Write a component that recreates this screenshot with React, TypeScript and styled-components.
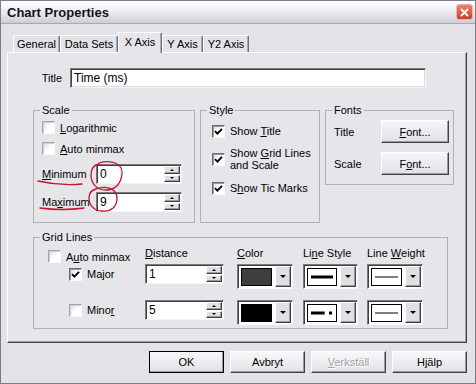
import React from 'react'
import styled, { createGlobalStyle } from 'styled-components'

const GlobalStyle = createGlobalStyle`
  body {
    margin: 0;
    font-family: "Liberation Sans", Arial, sans-serif;
    font-size: 11px;
    color: #000;
  }
`

const Window = styled.div`
  position: relative;
  width: 476px;
  height: 384px;
  box-sizing: border-box;
  background: #e3e3e7;
  border: 1px solid #7c7c8a;
  display: flex;
  flex-direction: column;
  overflow: hidden;
`

const TitleBar = styled.div`
  height: 22px;
  display: flex;
  align-items: center;
  justify-content: space-between;
  padding: 0 2px 0 6px;
  background: linear-gradient(#ffffff, #efeff3 45%, #cdcdd6);
  border-bottom: 1px solid #a9a9b6;
  font-size: 13px;
  font-weight: bold;
  color: #151515;
`

const CloseButton = styled.div`
  width: 17px;
  height: 16px;
  box-sizing: border-box;
  border-radius: 3px;
  border: 1px solid #f3b0a6;
  background: linear-gradient(#e8826f, #c8412c);
  display: flex;
  align-items: center;
  justify-content: center;
`

const Body = styled.div`
  flex: 1;
  display: flex;
  flex-direction: column;
  padding: 8px 8px 0 6px;
`

const TabStrip = styled.div`
  height: 20px;
  display: flex;
  align-items: flex-end;
  padding-left: 6px;
`

const Tab = styled.div<{ $w: number; $active?: boolean }>`
  position: relative;
  z-index: ${p => (p.$active ? 2 : 0)};
  width: ${p => p.$w}px;
  height: ${p => (p.$active ? 21 : 17)}px;
  margin-bottom: ${p => (p.$active ? -1 : 0)}px;
  box-sizing: border-box;
  background: ${p => (p.$active ? '#e6e6ea' : '#e3e3e7')};
  border-top: 1px solid #ffffff;
  border-left: 1px solid #ffffff;
  border-right: 1px solid #6f6f6f;
  border-radius: 2px 2px 0 0;
  box-shadow: inset -1px 0 0 #a8a8ae;
  display: flex;
  align-items: center;
  justify-content: center;
  padding-bottom: ${p => (p.$active ? 3 : 0)}px;
`

const Panel = styled.div`
  height: 291px;
  box-sizing: border-box;
  background: #e6e6ea;
  border: 1px solid;
  border-color: #ffffff #404040 #404040 #ffffff;
  box-shadow: inset -1px -1px 0 #a0a0a6;
  padding: 15px 0 0 25px;
  display: flex;
  flex-direction: column;
`

const TitleRow = styled.div`
  height: 20px;
  display: flex;
  align-items: center;
`

const RightLabel = styled.span<{ $w: number }>`
  width: ${p => p.$w}px;
  margin-right: 8px;
  text-align: right;
`

const TextInput = styled.div<{ $w: number }>`
  width: ${p => p.$w}px;
  height: 20px;
  box-sizing: border-box;
  background: #fff;
  border: 1px solid;
  border-color: #7a7a7a #f4f4f4 #f4f4f4 #7a7a7a;
  box-shadow: inset 1px 1px 0 #404040, inset -1px -1px 0 #dcdce0;
  padding-left: 3px;
  display: flex;
  align-items: center;
  font-size: 12px;
`

const GroupsRow = styled.div`
  margin-top: 16px;
  display: flex;
  align-items: flex-start;
  gap: 5px;
`

const Group = styled.fieldset<{ $w: number; $h: number }>`
  box-sizing: border-box;
  width: ${p => p.$w}px;
  height: ${p => p.$h}px;
  margin: 0;
  padding: 0;
  min-width: 0;
  border: 1px solid #b0b0b8;
`

const Legend = styled.legend`
  margin-left: 6px;
  padding: 0 2px;
  line-height: 13px;
`

const GroupBody = styled.div<{ $pt: number; $pl: number }>`
  display: flex;
  flex-direction: column;
  padding: ${p => p.$pt}px 0 0 ${p => p.$pl}px;
`

const CheckRow = styled.label<{ $h: number; $mt?: number; $indent?: number }>`
  height: ${p => p.$h}px;
  margin-top: ${p => p.$mt ?? 0}px;
  margin-left: ${p => p.$indent ?? 0}px;
  display: flex;
  align-items: center;
  gap: 5px;
  line-height: 12px;
  white-space: nowrap;
`

const Box = styled.span<{ $checked?: boolean }>`
  flex: none;
  width: 13px;
  height: 13px;
  box-sizing: border-box;
  background: linear-gradient(135deg, #dcdce0, #ffffff 55%);
  border: 1px solid;
  border-color: ${p => (p.$checked ? '#6a6a6a' : '#a4a4aa')} #f8f8f8 #f8f8f8
    ${p => (p.$checked ? '#6a6a6a' : '#a4a4aa')};
  box-shadow: inset 1px 1px 0 ${p => (p.$checked ? '#9a9a9a' : '#cfcfd4')};
  display: flex;
  align-items: center;
  justify-content: center;
`

const FieldRow = styled.div<{ $mt: number }>`
  margin-top: ${p => p.$mt}px;
  height: 20px;
  display: flex;
  align-items: center;
`

const FieldLabel = styled.span<{ $w: number }>`
  width: ${p => p.$w}px;
  flex: none;
`

const Spin = styled.div<{ $w: number; $mt?: number }>`
  width: ${p => p.$w}px;
  height: 20px;
  margin-top: ${p => p.$mt ?? 0}px;
  box-sizing: border-box;
  background: #fff;
  border: 1px solid;
  border-color: #7a7a7a #f4f4f4 #f4f4f4 #7a7a7a;
  box-shadow: inset 1px 1px 0 #404040;
  display: flex;
  align-items: stretch;
`

const SpinValue = styled.span`
  flex: 1;
  padding-left: 3px;
  display: flex;
  align-items: center;
  font-size: 12px;
`

const SpinButtons = styled.div`
  width: 16px;
  display: flex;
  flex-direction: column;
  gap: 1px;
  padding: 1px 1px 1px 0;
`

const Raised = styled.div`
  box-sizing: border-box;
  background: #e0e0e4;
  border: 1px solid;
  border-color: #ffffff #404040 #404040 #ffffff;
  box-shadow: inset -1px -1px 0 #9a9aa0;
  display: flex;
  align-items: center;
  justify-content: center;
`

const SpinButton = styled(Raised)`
  flex: 1;
`

const Arrow = styled.span<{ $up?: boolean; $size?: number }>`
  width: 0;
  height: 0;
  border-left: ${p => p.$size ?? 2}px solid transparent;
  border-right: ${p => p.$size ?? 2}px solid transparent;
  ${p => (p.$up ? 'border-bottom' : 'border-top')}: ${p => p.$size ?? 2}px solid #000;
`

const FontRow = styled.div<{ $mt?: number }>`
  margin-top: ${p => p.$mt ?? 0}px;
  height: 23px;
  display: flex;
  align-items: center;
`

const SmallButton = styled(Raised)<{ $w: number; $h: number }>`
  width: ${p => p.$w}px;
  height: ${p => p.$h}px;
  background: linear-gradient(#f6f6f8, #e2e2e6);
`

const GridGroup = styled(Group)`
  margin-top: 8px;
`

const GridBody = styled.div`
  display: grid;
  grid-template-columns: 97px 92px 66px 64px 56px;
  grid-template-rows: 19px 36px 27px;
  padding-left: 14px;
  align-items: start;
`

const ColLabel = styled.span`
  align-self: center;
  margin-top: -1px;
  white-space: nowrap;
`

const Combo = styled.div<{ $w: number }>`
  width: ${p => p.$w}px;
  height: 25px;
  margin-top: 1px;
  box-sizing: border-box;
  background: #fff;
  border: 1px solid;
  border-color: #7a7a7a #f8f8f8 #f8f8f8 #7a7a7a;
  box-shadow: inset 1px 1px 0 #404040;
  padding: 3px 1px 2px 3px;
  display: flex;
  gap: 3px;
`

const Swatch = styled.div<{ $fill?: string }>`
  flex: 1;
  box-sizing: border-box;
  border: 1px solid #000;
  background: ${p => p.$fill ?? '#fff'};
  display: flex;
  align-items: center;
  padding: 0 3px;
`

const DropButton = styled(Raised)`
  width: 16px;
  margin: -2px 0 -1px;
`

const ButtonRow = styled.div`
  margin-top: 8px;
  display: flex;
  justify-content: flex-end;
  gap: 6px;
`

const DialogButton = styled(Raised)<{ $default?: boolean; $disabled?: boolean }>`
  width: 75px;
  height: 22px;
  background: linear-gradient(#f8f8fa, #e2e2e6);
  ${p => (p.$default ? 'outline: 1px solid #000; outline-offset: -1px;' : '')}
  color: ${p => (p.$disabled ? '#a2a2a8' : '#000')};
  text-shadow: ${p => (p.$disabled ? '1px 1px 0 #fff' : 'none')};
`

const U = styled.span`
  text-decoration: underline;
`

const Marks = styled.svg`
  position: absolute;
  left: -1px;
  top: -1px;
  pointer-events: none;
`

const Check = () => (
  <svg width="9" height="9" viewBox="0 0 9 9">
    <path d="M1 4.2 L3.4 6.6 L8 1.8" fill="none" stroke="#000" strokeWidth="1.9" />
  </svg>
)

const CheckBox = ({ checked }: { checked?: boolean }) => (
  <Box $checked={checked}>{checked ? <Check /> : null}</Box>
)

const SpinBox = ({ value, w, mt }: { value: string; w: number; mt?: number }) => (
  <Spin $w={w} $mt={mt}>
    <SpinValue>{value}</SpinValue>
    <SpinButtons>
      <SpinButton><Arrow $up /></SpinButton>
      <SpinButton><Arrow /></SpinButton>
    </SpinButtons>
  </Spin>
)

const LineSample = ({ weight, dashed }: { weight: number; dashed?: boolean }) => (
  <svg width="100%" height="8">
    {dashed ? (
      <>
        <line x1="0" y1="4" x2="62%" y2="4" stroke="#000" strokeWidth={weight} />
        <rect x="82%" y="2.5" width="3" height="3" fill="#000" />
      </>
    ) : (
      <line x1="0" y1="4" x2="100%" y2="4" stroke="#000" strokeWidth={weight} />
    )}
  </svg>
)

const ComboBox = ({ w, children, fill }: { w: number; children?: React.ReactNode; fill?: string }) => (
  <Combo $w={w}>
    <Swatch $fill={fill}>{children}</Swatch>
    <DropButton><Arrow $size={3} /></DropButton>
  </Combo>
)

const tabs = [
  { label: 'General', w: 47 },
  { label: 'Data Sets', w: 58 },
  { label: 'X Axis', w: 44, active: true },
  { label: 'Y Axis', w: 41 },
  { label: 'Y2 Axis', w: 46 },
]

export default function App() {
  return (
    <>
      <GlobalStyle />
      <Window>
        <TitleBar>
          <span>Chart Properties</span>
          <CloseButton>
            <svg width="9" height="9" viewBox="0 0 9 9">
              <path d="M1 1 L8 8 M8 1 L1 8" stroke="#fff" strokeWidth="1.8" />
            </svg>
          </CloseButton>
        </TitleBar>
        <Body>
          <TabStrip>
            {tabs.map(t => (
              <Tab key={t.label} $w={t.w} $active={t.active}>{t.label}</Tab>
            ))}
          </TabStrip>
          <Panel>
            <TitleRow>
              <RightLabel $w={29}>Title</RightLabel>
              <TextInput $w={356}>Time (ms)</TextInput>
            </TitleRow>

            <GroupsRow>
              <Group $w={162} $h={119}>
                <Legend>Scale</Legend>
                <GroupBody $pt={0} $pl={8}>
                  <CheckRow $h={21}><CheckBox /><span><U>L</U>ogarithmic</span></CheckRow>
                  <CheckRow $h={21}><CheckBox /><span><U>A</U>uto minmax</span></CheckRow>
                  <FieldRow $mt={5}>
                    <FieldLabel $w={54}><U>M</U>inimum</FieldLabel>
                    <SpinBox value="0" w={86} />
                  </FieldRow>
                  <FieldRow $mt={8}>
                    <FieldLabel $w={54}>Ma<U>x</U>imum</FieldLabel>
                    <SpinBox value="9" w={86} />
                  </FieldRow>
                </GroupBody>
              </Group>

              <Group $w={120} $h={119}>
                <Legend>Style</Legend>
                <GroupBody $pt={4} $pl={11}>
                  <CheckRow $h={20}><CheckBox checked /><span>Show <U>T</U>itle</span></CheckRow>
                  <CheckRow $h={26} $mt={5}>
                    <CheckBox checked />
                    <span>Show <U>G</U>rid Lines<br />and Scale</span>
                  </CheckRow>
                  <CheckRow $h={20} $mt={6}><CheckBox checked /><span>S<U>h</U>ow Tic Marks</span></CheckRow>
                </GroupBody>
              </Group>

              <Group $w={129} $h={81}>
                <Legend>Fonts</Legend>
                <GroupBody $pt={3} $pl={8}>
                  <FontRow>
                    <FieldLabel $w={47}>Title</FieldLabel>
                    <SmallButton $w={68} $h={23}><span><U>F</U>ont...</span></SmallButton>
                  </FontRow>
                  <FontRow $mt={9}>
                    <FieldLabel $w={47}>Scale</FieldLabel>
                    <SmallButton $w={68} $h={23}><span>F<U>o</U>nt...</span></SmallButton>
                  </FontRow>
                </GroupBody>
              </Group>
            </GroupsRow>

            <GridGroup $w={415} $h={98}>
              <Legend>Grid Lines</Legend>
              <GridBody>
                <CheckRow $h={19} $mt={3}><CheckBox /><span>A<U>u</U>to minmax</span></CheckRow>
                <ColLabel><U>D</U>istance</ColLabel>
                <ColLabel><U>C</U>olor</ColLabel>
                <ColLabel>Li<U>n</U>e Style</ColLabel>
                <ColLabel>Line <U>W</U>eight</ColLabel>

                <CheckRow $h={20} $mt={1} $indent={21}><CheckBox checked /><span>Major</span></CheckRow>
                <SpinBox value="1" w={79} mt={1} />
                <ComboBox w={56} fill="#3e3e3e" />
                <ComboBox w={55}><LineSample weight={3} /></ComboBox>
                <ComboBox w={56}><LineSample weight={1} /></ComboBox>

                <CheckRow $h={20} $mt={1} $indent={21}><CheckBox /><span>Mino<U>r</U></span></CheckRow>
                <SpinBox value="5" w={79} mt={1} />
                <ComboBox w={56} fill="#000" />
                <ComboBox w={55}><LineSample weight={3} dashed /></ComboBox>
                <ComboBox w={56}><LineSample weight={1} /></ComboBox>
              </GridBody>
            </GridGroup>
          </Panel>

          <ButtonRow>
            <DialogButton $default>OK</DialogButton>
            <DialogButton>Avbryt</DialogButton>
            <DialogButton $disabled><span><U>V</U>erkställ</span></DialogButton>
            <DialogButton>Hjälp</DialogButton>
          </ButtonRow>
        </Body>

        <Marks width="476" height="384" viewBox="0 0 476 384">
          <g fill="none" stroke="#c8102e" strokeWidth="1.3" strokeLinecap="round">
            <path d="M38 181 Q60 186 82 184" />
            <path d="M99 163 C112 159 123 164 122 174 C121 184 115 190 106 190 C97 190 91 184 91 175 C91 169 94 165 99 164" />
            <path d="M40 208 Q62 211 84 208" />
            <path d="M96 189 C106 185 117 189 117 198 C117 207 111 212 102 211 C94 211 89 205 89 198 C89 193 92 190 96 189" />
          </g>
        </Marks>
      </Window>
    </>
  )
}
